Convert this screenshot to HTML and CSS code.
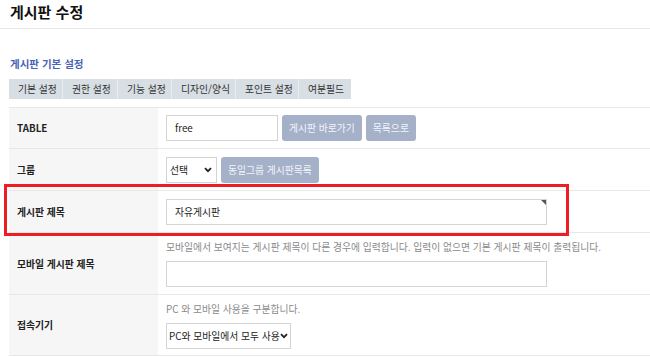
FILE: index.html
```html
<!DOCTYPE html>
<html lang="ko">
<head>
<meta charset="utf-8">
<link rel="stylesheet" href="styles.css">
</head>
<body>
<header class="page-head"><h1 class="page-title">게시판 수정</h1></header>
<main class="content">
  <h2 class="section-title">게시판 기본 설정</h2>
  <ul class="tabs">
    <li class="tab">기본 설정</li>
    <li class="tab">권한 설정</li>
    <li class="tab">기능 설정</li>
    <li class="tab">디자인/양식</li>
    <li class="tab">포인트 설정</li>
    <li class="tab">여분필드</li>
  </ul>
  <div class="table-wrap">
  <table class="form-table">
    <tr class="row-table">
      <th>TABLE</th>
      <td>
        <div class="inline">
          <input class="field field-sm" type="text" value="free">
          <button class="btn">게시판 바로가기</button>
          <button class="btn">목록으로</button>
        </div>
      </td>
    </tr>
    <tr class="row-group">
      <th>그룹</th>
      <td>
        <div class="inline">
          <span class="select-wrap select-sm">
            <select class="select"><option>선택</option></select>
            <svg class="chev" width="8" height="6" viewBox="0 0 8 6"><path d="M1 1.2 L4 4.2 L7 1.2" fill="none" stroke="#222" stroke-width="1.8"/></svg>
          </span>
          <button class="btn">동일그룹 게시판목록</button>
        </div>
      </td>
    </tr>
    <tr class="row-subject">
      <th>게시판 제목</th>
      <td>
        <span class="field-wrap">
          <input class="field field-lg" type="text" value="자유게시판">
          <span class="corner"></span>
        </span>
      </td>
    </tr>
    <tr class="row-mobile">
      <th>모바일 게시판 제목</th>
      <td>
        <p class="help">모바일에서 보여지는 게시판 제목이 다른 경우에 입력합니다. 입력이 없으면 기본 게시판 제목이 출력됩니다.</p>
        <input class="field field-lg" type="text" value="">
      </td>
    </tr>
    <tr class="row-device">
      <th>접속기기</th>
      <td>
        <p class="help">PC 와 모바일 사용을 구분합니다.</p>
        <span class="select-wrap select-md">
          <select class="select select-wide"><option>PC와 모바일에서 모두 사용</option></select>
          <svg class="chev chev-tight" width="8" height="6" viewBox="0 0 8 6"><path d="M1 1.2 L4 4.2 L7 1.2" fill="none" stroke="#222" stroke-width="1.8"/></svg>
        </span>
      </td>
    </tr>
  </table>
  <div class="highlight"></div>
  </div>
</main>
</body>
</html>
```

FILE: styles.css
```css
* { box-sizing: border-box; }
html, body { margin: 0; padding: 0; background: #fff; }
body {
  font-family: "Noto Sans CJK KR", "Noto Sans", sans-serif;
  color: #222;
  width: 650px;
  height: 357px;
  overflow: hidden;
}
.page-head {
  height: 29px;
  border-bottom: 1px solid #e6e6e6;
  padding-left: 10px;
}
.page-title {
  margin: 0;
  font-size: 15px;
  line-height: 24px;
  font-weight: 700;
  color: #111;
}
.content { padding: 28px 0 0 9px; }
.section-title {
  margin: 0 0 0 1px;
  font-size: 10.5px;
  line-height: 14px;
  font-weight: 700;
  color: #4862b8;
}
.tabs {
  display: flex;
  list-style: none;
  margin: 8px 0 0 0;
  padding: 0;
}
.tab {
  height: 20px;
  line-height: 20px;
  font-size: 9.8px;
  color: #333;
  white-space: nowrap;
  background: #d7dee4;
  border-right: 1px solid #eaeef1;
  padding: 0 0 0 9px;
}
.tab:nth-child(1) { width: 54px; }
.tab:nth-child(2) { width: 55px; }
.tab:nth-child(3) { width: 54px; }
.tab:nth-child(4) { width: 64px; }
.tab:nth-child(5) { width: 63px; }
.tab:nth-child(6) { width: 52px; border-right: 0; }

.table-wrap { position: relative; margin-top: 8px; }
.form-table {
  width: 641px;
  border-collapse: collapse;
  border-top: 1px solid #e8e8e8;
}
.form-table tr { border-bottom: 1px solid #e8e8e8; }
.form-table th {
  width: 149px;
  background: #f6f6f6;
  text-align: left;
  font-size: 9.8px;
  font-weight: 700;
  color: #222;
  padding: 0 0 0 8px;
}
.form-table td {
  padding: 0 0 0 8px;
  vertical-align: middle;
}
.row-table th, .row-table td { height: 41px; }
.row-group th, .row-group td { height: 42px; }
.row-subject th, .row-subject td { height: 42px; }
.row-mobile th, .row-mobile td { height: 62px; }
.row-device th, .row-device td { height: 61px; }

.inline { display: flex; gap: 4px; align-items: center; }
.field {
  height: 26px;
  border: 1px solid #d4d4d4;
  background: #fff;
  font-family: inherit;
  font-size: 9.8px;
  color: #222;
  padding: 0 8px;
  margin: 0;
  outline: none;
  display: block;
}
.field-sm { width: 112px; }
.field-lg { width: 381px; }
.field-wrap { position: relative; display: block; width: 381px; }
.corner {
  position: absolute;
  top: 1px;
  right: 1px;
  width: 0;
  height: 0;
  border-top: 5px solid #555;
  border-left: 5px solid transparent;
}
.btn {
  height: 26px;
  border: 0;
  border-radius: 3px;
  background: #a5b0c9;
  color: #f3f5fa;
  font-family: inherit;
  font-size: 9.8px;
  padding: 0 7px;
  margin: 0;
  white-space: nowrap;
}
.select-wrap { position: relative; display: block; }
.select-sm { width: 51px; }
.select-md { width: 125px; }
.select {
  appearance: none;
  -webkit-appearance: none;
  width: 100%;
  height: 26px;
  border: 1px solid #d4d4d4;
  background: #fff;
  font-family: inherit;
  font-size: 9.8px;
  color: #222;
  padding: 0 14px 0 3px;
  margin: 0;
  display: block;
  outline: none;
}
.select-wide { padding: 0 9px 0 2px; }
.chev { position: absolute; right: 5px; top: 10px; }
.chev-tight { right: 3px; }
.help {
  margin: 0 0 7px 0;
  font-size: 9.8px;
  line-height: 14px;
  color: #8a8a8a;
}

.highlight {
  position: absolute;
  left: -5px;
  top: 77px;
  width: 565px;
  height: 52px;
  border: 3px solid #ee1c25;
  pointer-events: none;
}
```
